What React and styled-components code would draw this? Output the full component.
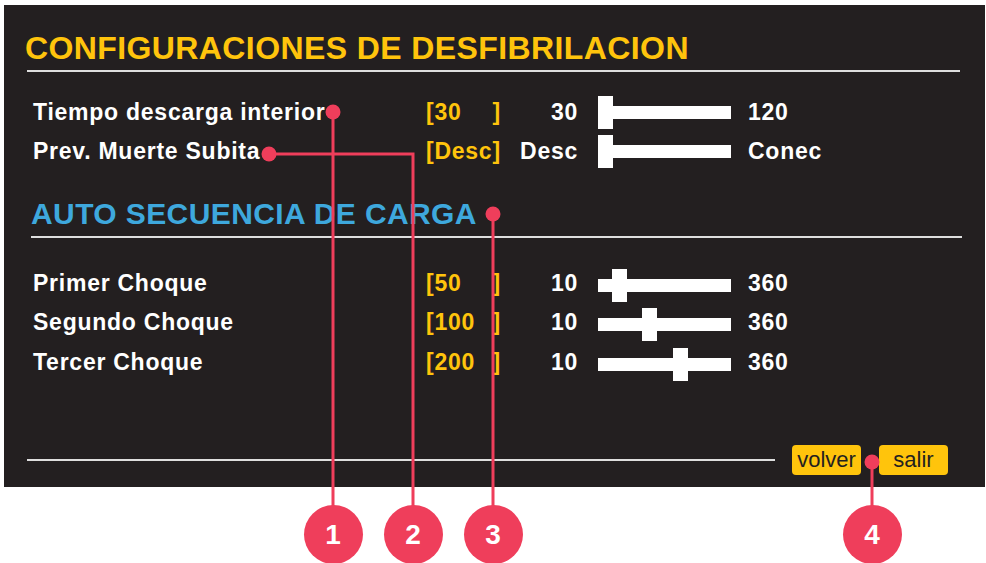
import styled, { createGlobalStyle } from "styled-components";

const GlobalStyle = createGlobalStyle`
    html, body {
        margin: 0;
        padding: 0;
        background: #ffffff;
    }
    body {
        font-family: "Liberation Sans", Arial, sans-serif;
    }
`

const firstRows = [
    { label: "Tiempo descarga interior", value: "30", min: "30", max: "120", pos: 0 },
    { label: "Prev. Muerte Subita", value: "Desc", min: "Desc", max: "Conec", pos: 0 },
];

const shockRows = [
    { label: "Primer Choque", value: "50", min: "10", max: "360", pos: 14 },
    { label: "Segundo Choque", value: "100", min: "10", max: "360", pos: 44 },
    { label: "Tercer Choque", value: "200", min: "10", max: "360", pos: 75 },
];

const badges = [
    { n: 1, x: 333 },
    { n: 2, x: 413 },
    { n: 3, x: 493 },
    { n: 4, x: 872 },
];

function SettingRow({ row, shift }) {
    return (
        <Row>
            <Label>{row.label}</Label>
            <Bracket>
                <span>[{row.value}</span>
                <span>]</span>
            </Bracket>
            <MinValue>{row.min}</MinValue>
            <Slider $shift={shift}>
                <Thumb style={{ left: row.pos }} />
            </Slider>
            <MaxValue>{row.max}</MaxValue>
        </Row>
    );
}

export default function App() {
    return (
        <Page>
            <GlobalStyle />
            <Panel>
                <Title>CONFIGURACIONES DE DESFIBRILACION</Title>
                <Rule $left={2} $top={6} />
                <Rows $top={20.5} $height={39}>
                    {firstRows.map((row, index) => <SettingRow key={index} row={row} shift={0} />)}
                </Rows>
                <SubTitle>AUTO SECUENCIA DE CARGA</SubTitle>
                <Rule $left={6} $right={-2} $top={7.5} />
                <Rows $top={25.25} $height={39.5}>
                    {shockRows.map((row, index) => <SettingRow key={index} row={row} shift={3} />)}
                </Rows>
                <Footer>
                    <FooterRule />
                    <Button>volver</Button>
                    <Button>salir</Button>
                </Footer>
            </Panel>

            <Callouts width="986" height="563" viewBox="0 0 986 563">
                <g stroke="#ef3e5b" strokeWidth="3" fill="none">
                    <path d="M333 112 V510" />
                    <path d="M269 154 H413 V510" />
                    <path d="M493 214 V510" />
                    <path d="M872 462 V510" />
                </g>
                <g fill="#ef3e5b">
                    <circle cx="333" cy="112" r="7.5" />
                    <circle cx="269" cy="154" r="7.5" />
                    <circle cx="493" cy="214" r="7.5" />
                    <circle cx="872" cy="462" r="7.5" />
                </g>
            </Callouts>
            {badges.map((b) => (
                <Badge key={b.n} style={{ left: b.x - 29.5 }}>{b.n}</Badge>
            ))}
        </Page>
    );
}

const Page = styled.div`
    position: relative;
    width: 986px;
    height: 563px;
    overflow: hidden;
    background: #ffffff;
`

const Panel = styled.div`
    box-sizing: border-box;
    margin: 5px 0 0 4px;
    width: 981px;
    height: 482px;
    padding: 0 25px 0 21px;
    background-color: #231f20;
    display: flex;
    flex-direction: column;
`

const Title = styled.h1`
    margin: 27px 0 0 0;
    font-size: 32px;
    line-height: 32px;
    height: 32px;
    font-weight: bold;
    letter-spacing: 0.4px;
    color: #ffc40c;
    white-space: nowrap;
`

const SubTitle = styled.h2`
    margin: 28px 0 0 6px;
    font-size: 30px;
    line-height: 30px;
    height: 30px;
    font-weight: bold;
    letter-spacing: 0.4px;
    color: #3ea8dd;
    white-space: nowrap;
`

const Rule = styled.div`
    height: 2px;
    background-color: #dedede;
    margin: ${p => p.$top}px ${p => p.$right || 0}px 0 ${p => p.$left}px;
`

const Rows = styled.div`
    margin-top: ${p => p.$top}px;
    padding-left: 8px;
    display: grid;
    grid-auto-rows: ${p => p.$height}px;
`

const Row = styled.div`
    display: grid;
    grid-template-columns: 392px 78px 76px auto 1fr;
    align-items: center;
    font-size: 23px;
    line-height: 23px;
    font-weight: bold;
    letter-spacing: 0.75px;
    color: #ffffff;
    white-space: nowrap;
`

const Label = styled.span``

const Bracket = styled.span`
    display: flex;
    justify-content: space-between;
    padding-left: 1px;
    padding-right: 2px;
    color: #ffc40c;
`

const MinValue = styled.span`
    text-align: right;
    padding-right: 1px;
`

const Slider = styled.div`
    position: relative;
    width: 133px;
    height: 13px;
    margin: ${p => p.$shift + 1}px 17px 0 19px;
    background-color: #ffffff;
`

const Thumb = styled.div`
    position: absolute;
    top: -10px;
    width: 15px;
    height: 33px;
    background-color: #ffffff;
`

const MaxValue = styled.span``

const Footer = styled.div`
    margin: auto 12px 12px 2px;
    height: 30px;
    display: flex;
    align-items: center;
    gap: 18px;
`

const FooterRule = styled.div`
    flex: 1;
    height: 2px;
    margin-right: -1px;
    background-color: #dedede;
`

const Button = styled.div`
    box-sizing: border-box;
    height: 30px;
    min-width: 69px;
    padding: 0 4px;
    border-radius: 4px;
    background-color: #ffc40c;
    color: #231f20;
    font-size: 22px;
    line-height: 30px;
    text-align: center;
`

const Callouts = styled.svg`
    position: absolute;
    left: 0;
    top: 0;
    pointer-events: none;
`

const Badge = styled.div`
    position: absolute;
    top: 505px;
    width: 59px;
    height: 59px;
    border-radius: 50%;
    background-color: #ef3e5b;
    color: #ffffff;
    font-size: 28px;
    font-weight: bold;
    line-height: 59px;
    text-align: center;
`
